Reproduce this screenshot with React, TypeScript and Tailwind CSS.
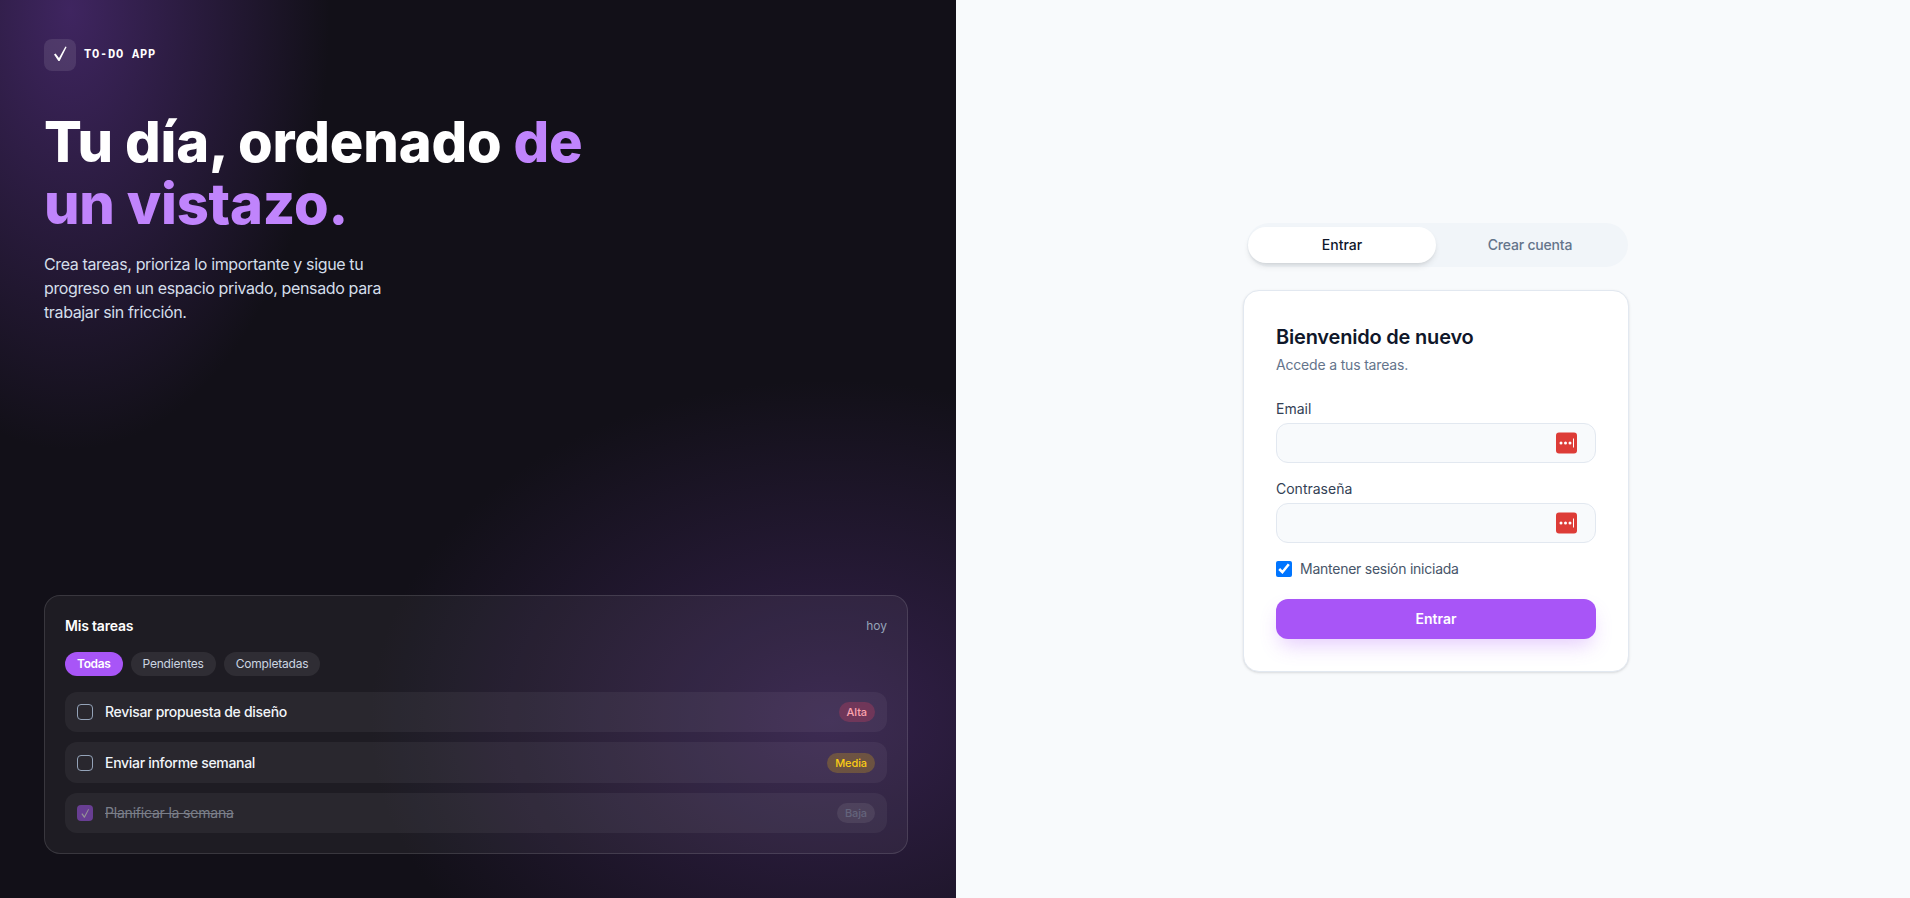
import React from 'react'

const tasks = [
  { label: 'Revisar propuesta de diseño', tag: 'Alta', tagClass: 'bg-[#f43f5e40] text-[#fda4af]', done: false, rowClass: 'h-10' },
  { label: 'Enviar informe semanal', tag: 'Media', tagClass: 'bg-[#eab30840] text-[#facc15]', done: false, rowClass: 'h-[41px]' },
  { label: 'Planificar la semana', tag: 'Baja', tagClass: 'bg-[#ffffff14] text-[#64647c]', done: true, rowClass: 'h-10' },
]

const CheckGlyph = ({ size, box }: { size: number; box: string }) => (
  <svg width={size} height={size} viewBox={box} fill="#ffffff">
    <path d="M10 15.6 L11.6 14.6 L15 19 L21.4 7.5 L22.6 8 L15.6 22 L14.4 22 Z" />
  </svg>
)

const PasswordKey = () => (
  <span className="absolute right-[18px] top-1/2 flex h-[21px] w-[21px] -translate-y-1/2 items-center justify-center rounded-[3px] bg-[#dd3c37]">
    <svg width="16" height="11" viewBox="0 0 16 11" fill="#ffffff">
      <circle cx="2" cy="5.5" r="1.5" />
      <circle cx="6.5" cy="5.5" r="1.5" />
      <circle cx="11" cy="5.5" r="1.5" />
      <rect x="14" y="1" width="1" height="9" />
    </svg>
  </span>
)

const Field = ({ label }: { label: string }) => (
  <div className="flex flex-col">
    <label className="mb-1 text-sm leading-5 text-[#334155]">{label}</label>
    <div className="relative h-10 rounded-xl border border-[#e2e8f0] bg-[#f8fafc]">
      <PasswordKey />
    </div>
  </div>
)

const TaskRow = ({ label, tag, tagClass, done, rowClass }: (typeof tasks)[number]) => (
  <div className={`flex items-center justify-between rounded-xl bg-[#ffffff0d] pr-3 pl-3 ${rowClass}`}>
    <div className={`flex items-center gap-3 ${done ? 'opacity-50' : ''}`}>
      {done ? (
        <span className="flex h-4 w-4 items-center justify-center rounded bg-[#a855f7]">
          <CheckGlyph size={12} box="6 4 20 20" />
        </span>
      ) : (
        <span className="h-4 w-4 rounded border border-[#94a3b8]" />
      )}
      <span className={`text-sm ${done ? 'tracking-[-0.2px] text-[#cbd5e1] line-through' : 'font-medium tracking-[-0.3px] text-[#f1f5f9]'}`}>{label}</span>
    </div>
    <span className={`rounded-full px-2 py-[2px] text-[11px] leading-4 font-medium tracking-[-0.1px] ${tagClass}`}>{tag}</span>
  </div>
)

export default function App() {
  return (
    <div className="grid h-[898px] w-full grid-cols-[956px_1fr] font-['Inter',sans-serif]">
      <section className="flex flex-col justify-between bg-[#121018] bg-[radial-gradient(ellipse_260px_440px_at_70px_10px,#3f2560_0%,#3f256000_100%),radial-gradient(ellipse_460px_340px_at_830px_720px,#33204a_0%,#33204a00_100%)] pt-[39px] pr-12 pb-11 pl-11">
        <div>
          <div className="flex items-center gap-2">
            <span className="flex h-8 w-8 items-center justify-center rounded-lg bg-[#ffffff1a]">
              <CheckGlyph size={32} box="0 0 32 32" />
            </span>
            <span className="font-['Liberation_Mono',monospace] text-xs font-bold tracking-[0.8px] text-white">TO-DO APP</span>
          </div>
          <h1 className="mt-[40px] max-w-[560px] text-[56px] leading-[62px] font-extrabold tracking-[-0.2px] text-white">
            Tu día, ordenado <span className="text-[#c084fc]">de</span> <span className="text-[#c084fc]">un vistazo.</span>
          </h1>
          <p className="mt-[17px] max-w-[350px] text-base leading-6 tracking-[-0.37px] text-[#d4deea]">
            Crea tareas, prioriza lo importante y sigue tu progreso en un espacio privado, pensado para trabajar sin fricción.
          </p>
        </div>
        <div className="flex h-[259px] flex-col rounded-2xl border border-[#ffffff1f] bg-[#ffffff0d] p-5">
          <div className="flex items-center justify-between">
            <span className="text-sm font-semibold tracking-[-0.2px] text-white">Mis tareas</span>
            <span className="text-xs text-[#94a3b8]">hoy</span>
          </div>
          <div className="mt-[16px] flex gap-2">
            <span className="rounded-full bg-[#a855f7] px-3 py-1 text-xs font-semibold tracking-[-0.35px] text-white">Todas</span>
            <span className="rounded-full bg-[#ffffff14] px-3 py-1 text-xs tracking-[-0.2px] text-[#cbd5e1]">Pendientes</span>
            <span className="rounded-full bg-[#ffffff14] px-3 py-1 text-xs tracking-[-0.2px] text-[#cbd5e1]">Completadas</span>
          </div>
          <div className="mt-4 flex flex-col gap-[10px]">
            {tasks.map((task) => (
              <TaskRow key={task.label} {...task} />
            ))}
          </div>
        </div>
      </section>
      <main className="flex items-center justify-center bg-[#f8fafc] pb-[3px] pl-[6px]">
        <div className="flex w-[386px] flex-col gap-[23px]">
          <div className="ml-1 mr-[1px] flex h-11 rounded-full bg-[#f1f5f9] py-1 pr-1 pl-[1px]">
            <button className="flex-1 rounded-full bg-white text-sm font-medium text-[#0f172a] shadow-md">Entrar</button>
            <button className="flex-1 rounded-full text-sm font-medium tracking-[-0.2px] text-[#64748b]">Crear cuenta</button>
          </div>
          <div className="rounded-2xl border border-[#e2e8f0] bg-white p-8 shadow-sm">
            <h2 className="text-xl leading-7 font-semibold tracking-[-0.2px] text-[#0f172a]">Bienvenido de nuevo</h2>
            <p className="mt-1 text-sm leading-5 tracking-[-0.18px] text-[#64748b]">Accede a tus tareas.</p>
            <div className="mt-6 flex flex-col gap-4">
              <Field label="Email" />
              <Field label="Contraseña" />
            </div>
            <label className="mt-4 flex items-center gap-2 text-sm leading-5 tracking-[-0.25px] text-[#475569]">
              <input type="checkbox" defaultChecked className="h-4 w-4 accent-[#0075ff]" />
              Mantener sesión iniciada
            </label>
            <button className="mt-5 h-10 w-full rounded-xl bg-[#a855f7] text-sm font-semibold text-white shadow-[0_10px_20px_-4px_#a855f74d]">Entrar</button>
          </div>
        </div>
      </main>
    </div>
  )
}
